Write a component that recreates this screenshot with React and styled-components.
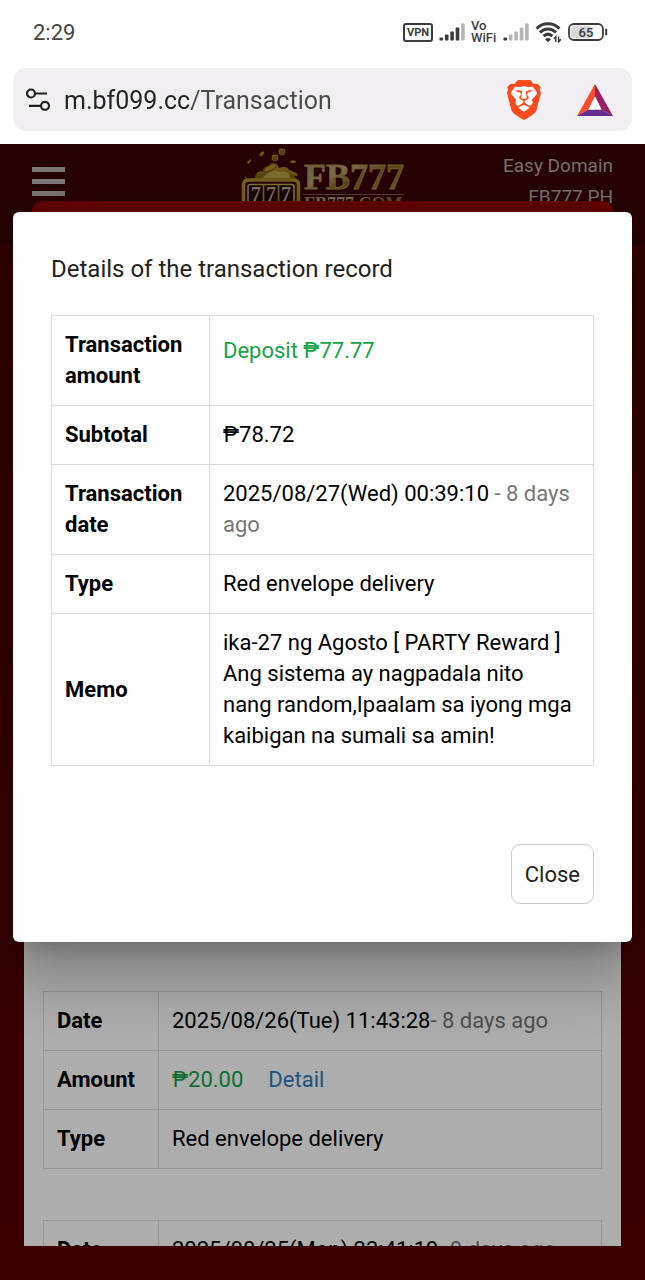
import React from "react";
import styled, { createGlobalStyle } from "styled-components";
import { SiBrave } from "react-icons/si";

const Signal = ({ level }) => (
  <svg width="26" height="18" viewBox="0 0 26 18" aria-hidden="true">
    {[3, 6, 9, 13, 17].map((h, i) => (
      <rect key={i} x={i * 5.4 + 0.5} y={17.5 - h} width="3.6" height={h} rx="0.8" fill={i < level ? "#3c3c3c" : "#b5b5b5"} />
    ))}
  </svg>
);

const Wifi = () => (
  <svg width="27" height="22" viewBox="0 0 27 22" fill="none" stroke="#3c3c3c" strokeWidth="3" aria-hidden="true">
    <path d="M1.5 7.5C8 1 18 1 24.5 7.5" />
    <path d="M5 11.5C9.8 6.8 16.2 6.8 21 11.5" />
    <path d="M8.6 15.2C11.3 12.6 14.7 12.6 17.4 15.2" />
    <path d="M13 21.2L10 18.2Q13 15.8 16 18.2Z" fill="#3c3c3c" stroke="none" />
    <path d="M20.8 21V15.5L18.8 18.2M23.6 15.5V21L25.8 18.2" strokeWidth="1.4" />
  </svg>
);

const Battery = () => (
  <svg width="40" height="18" viewBox="0 0 40 18" aria-hidden="true">
    <rect x="3" y="3" width="21" height="12" rx="3" fill="#d8d8d8" />
    <rect x="1" y="1" width="34" height="16" rx="5" fill="none" stroke="#3c3c3c" strokeWidth="1.8" />
    <path d="M38.2 6.5V11.5" stroke="#3c3c3c" strokeWidth="2" strokeLinecap="round" />
    <text x="18" y="14" textAnchor="middle" fontFamily="Roboto, sans-serif" fontSize="13" fontWeight="500" fill="#3c3c3c">65</text>
  </svg>
);

const SiteSettings = () => (
  <svg width="24" height="24" viewBox="0 0 24 24" fill="none" stroke="#222" strokeWidth="2.2" aria-hidden="true">
    <circle cx="5" cy="5.5" r="4" />
    <path d="M9 5.5H21M3 17.8H15" />
    <circle cx="19" cy="17.8" r="4" />
  </svg>
);

const BatTriangle = () => (
  <svg width="36" height="32" viewBox="0 0 36 32" aria-hidden="true">
    <path d="M18 0L0 32L11.5 25.5L18 12.5Z" fill="#ff4b2e" />
    <path d="M18 0L36 32L24.5 25.5L18 12.5Z" fill="#9c1f63" />
    <path d="M0 32H36L24.5 25.5H11.5Z" fill="#652d91" />
    <path d="M18 12.5L24.5 25.5H11.5Z" fill="#fff" />
  </svg>
);

const Logo = () => (
  <svg width="164" height="64" viewBox="0 0 164 64" role="img" aria-label="FB777.COM">
    <defs>
      <linearGradient id="gold" x1="0" y1="0" x2="1" y2="1">
        <stop offset="0" stopColor="#8d7b5a" />
        <stop offset="0.35" stopColor="#b9a36c" />
        <stop offset="0.55" stopColor="#8a6420" />
        <stop offset="1" stopColor="#b08a38" />
      </linearGradient>
      <linearGradient id="coin" x1="0" y1="0" x2="0" y2="1">
        <stop offset="0" stopColor="#b99a30" />
        <stop offset="1" stopColor="#7a5a10" />
      </linearGradient>
    </defs>
    <g fill="url(#coin)">
      <path d="M14 34Q14 27 22 27Q22 23 27 23Q30 17 36 20L38 24Q46 21 48 26Q54 27 53 32L56 35H13Z" />
      <circle cx="41" cy="8" r="3.4" />
      <circle cx="34" cy="14" r="3.4" />
      <ellipse cx="21" cy="10" rx="2.8" ry="1.7" transform="rotate(-45 21 10)" />
      <ellipse cx="52" cy="18" rx="3" ry="1.4" />
      <ellipse cx="53" cy="30" rx="4" ry="1.6" transform="rotate(20 53 30)" />
      <path d="M6 18L10 15V17L7 20ZM3 31L7 35L5 36Z" />
    </g>
    <g fill="none" stroke="#6d4d0c" strokeWidth="1">
      <ellipse cx="29" cy="24" rx="7" ry="2.6" transform="rotate(-28 29 24)" fill="#b3902c" />
      <circle cx="34" cy="14" r="1.8" />
      <circle cx="41" cy="8" r="1.8" />
    </g>
    <path d="M22 34Q30 24 38 28Q48 25 49 34Z" fill="#b6a348" />
    <path d="M2.5 64V41Q2.5 36 8 36H52Q57.5 36 57.5 41V64" fill="none" stroke="#a88c2c" strokeWidth="3.6" />
    <path d="M7 64V43Q7 40.5 9.5 40.5H50.5Q53 40.5 53 43V64" fill="#230303" stroke="#c2a744" strokeWidth="1.6" />
    <path d="M22.5 41V64M37.5 41V64" stroke="#a98f3c" strokeWidth="1.6" />
    <g fontFamily="'Liberation Serif', serif" fontWeight="700" fill="url(#gold)">
      <text x="10" y="57" fontSize="20" fill="#b3a683">7</text>
      <text x="25" y="57" fontSize="20" fill="#b3a683">7</text>
      <text x="40" y="57" fontSize="20" fill="#b3a683">7</text>
      <text x="63" y="45" fontSize="36" stroke="#a58b50" strokeWidth="0.8">FB777</text>
      <text x="63" y="66" fontSize="18">FB777.COM</text>
    </g>
    <path d="M62 50.5H163" stroke="#7d5a40" strokeWidth="1" />
  </svg>
);

const InfoTable = ({ rows, labelWidth }) => (
  <Table>
    <tbody>
      {rows.map((row) => (
        <tr key={row.label}>
          <LabelCell scope="row" $width={labelWidth}>{row.label}</LabelCell>
          <ValueCell>{row.value}</ValueCell>
        </tr>
      ))}
    </tbody>
  </Table>
);

const App = () => {
  return (
    <>
      <GlobalStyle />
      <Screen>
        <StatusBar>
          <Clock>2:29</Clock>
          <StatusIcons>
            <VpnBadge>VPN</VpnBadge>
            <Signal level={4} />
            <VoWifi>
              <span>Vo</span>
              <span>WiFi</span>
            </VoWifi>
            <Signal level={1} />
            <Wifi />
            <Battery />
          </StatusIcons>
        </StatusBar>
        <AddressBar>
          <IconButton type="button" aria-label="Site settings"><SiteSettings /></IconButton>
          <UrlInput type="text" aria-label="Address" defaultValue="m.bf099.cc/Transaction" />
          <IconButton type="button" aria-label="Brave Shields">
            <Shield><SiBrave size={40} fill="#fb4a1c" /></Shield>
          </IconButton>
          <IconButton type="button" aria-label="Brave Rewards"><BatTriangle /></IconButton>
        </AddressBar>

        <Site>
          <SiteHeader>
            <MenuButton type="button" aria-label="Menu"><i /><i /><i /></MenuButton>
            <Logo />
            <DomainLinks>
              <a href="#domain">Easy Domain</a>
              <a href="#ph">FB777 PH</a>
            </DomainLinks>
          </SiteHeader>
          <Banner />
          <RecordPanel>
            {RECORDS.map((rows, index) => (
              <InfoTable key={index} rows={rows} labelWidth={115} />
            ))}
          </RecordPanel>

          <Backdrop />
          <Modal role="dialog" aria-modal="true" aria-labelledby="modal-title">
            <ModalTitle id="modal-title">Details of the transaction record</ModalTitle>
            <InfoTable rows={DETAILS} labelWidth={158} />
            <ModalActions>
              <CloseButton type="button">Close</CloseButton>
            </ModalActions>
          </Modal>
        </Site>
      </Screen>
    </>
  );
};

const GlobalStyle = createGlobalStyle`
  * {
    box-sizing: border-box;
  }

  body {
    margin: 0;
    background: #fff;
    font-family: Roboto, "Liberation Sans", sans-serif;
    font-size: 22px;
    line-height: 31px;
    color: #000;
  }

  button, input {
    font: inherit;
  }

  svg {
    display: block;
    flex: none;
  }
`;

const Screen = styled.div`
  display: flex;
  flex-direction: column;
  height: 100vh;
  overflow: hidden;
`;

const StatusBar = styled.div`
  display: flex;
  align-items: center;
  justify-content: space-between;
  flex: none;
  height: 68px;
  padding: 0 37px 4px 33px;
`;

const Clock = styled.span`
  color: #444;
`;

const StatusIcons = styled.div`
  display: flex;
  align-items: center;
  gap: 6px;
`;

const VpnBadge = styled.span`
  width: 30px;
  border: 2px solid #3c3c3c;
  border-radius: 3px;
  color: #3c3c3c;
  font-size: 11px;
  font-weight: 700;
  line-height: 15px;
  text-align: center;
`;

const VoWifi = styled.span`
  display: flex;
  flex-direction: column;
  width: 26px;
  color: #3c3c3c;
  font-size: 13px;
  font-weight: 500;
  line-height: 12px;
`;

const AddressBar = styled.div`
  display: flex;
  align-items: center;
  flex: none;
  height: 63px;
  margin: 0 13px 13px;
  padding: 0 19px 0 13px;
  border-radius: 13px;
  background: #f1eff1;
`;

const IconButton = styled.button`
  display: flex;
  padding: 0;
  border: 0;
  background: none;

  & + & {
    margin-left: 33px;
  }
`;

const UrlInput = styled.input`
  flex: 1;
  min-width: 0;
  margin: 0 14px;
  padding: 1px 0 0;
  border: 0;
  outline: 0;
  background: linear-gradient(90deg, #222 128px, #4b4b4b 128px);
  background-clip: text;
  color: transparent;
  font-size: 25px;
`;

const Shield = styled.span`
  display: flex;
  background: radial-gradient(ellipse 12px 15px, #fff 98%, transparent);
`;

const Site = styled.div`
  position: relative;
  display: flex;
  flex-direction: column;
  flex: 1;
  min-height: 0;
  background: linear-gradient(#4a0000, #560000);
`;

const SiteHeader = styled.header`
  display: grid;
  grid-template-columns: 1fr auto 1fr;
  align-items: start;
  flex: none;
  height: 101px;
  padding: 0 32px;
  background: #3a0000;
`;

const MenuButton = styled.button`
  display: flex;
  flex-direction: column;
  gap: 7px;
  width: 33px;
  margin-top: 23px;
  padding: 0;
  border: 0;
  background: none;

  i {
    width: 100%;
    height: 5px;
    background: #b9b2b2;
  }
`;

const DomainLinks = styled.nav`
  display: flex;
  flex-direction: column;
  align-items: flex-end;
  padding-top: 6px;
  font-size: 19px;

  a {
    color: #b3a6a6;
    text-decoration: none;
  }
`;

const Banner = styled.div`
  flex: none;
  height: 60px;
  margin: -44px 32px 0;
  border-radius: 10px 10px 0 0;
  background: #930000;
`;

const RecordPanel = styled.main`
  display: flex;
  flex-direction: column;
  gap: 51px;
  flex: 1;
  min-height: 0;
  overflow: hidden;
  margin: 0 24px 34px;
  padding: 730px 19px 0;
  background: #fff;
`;

const Backdrop = styled.div`
  position: absolute;
  inset: 0;
  background: rgba(0, 0, 0, 0.32);
`;

const Modal = styled.section`
  position: absolute;
  top: 68px;
  left: 13px;
  right: 13px;
  padding: 42px 38px 38px;
  border-radius: 6px;
  background: #fff;
  box-shadow: 0 18px 24px -11px rgba(0, 0, 0, 0.2), 0 38px 61px 5px rgba(0, 0, 0, 0.14),
    0 14px 74px 13px rgba(0, 0, 0, 0.12);
`;

const ModalTitle = styled.h2`
  margin: 0 0 30px;
  color: #222;
  font-size: 24px;
  font-weight: 400;
`;

const Table = styled.table`
  width: 100%;
  border-collapse: collapse;
`;

const LabelCell = styled.th`
  width: ${(props) => props.$width}px;
  padding: 13px 13px 14px;
  border: 1px solid #ddd;
  font-weight: 700;
  text-align: left;
`;

const ValueCell = styled.td`
  padding: 13px 13px 14px;
  border: 1px solid #ddd;
  vertical-align: top;
`;

const Raised = styled.div`
  padding: 6px 0;
`;

const Money = styled.span`
  color: #16a34a;
`;

const Ago = styled.span`
  color: #777;
`;

const DetailLink = styled.a`
  margin-left: 25px;
  color: #337ab7;
  text-decoration: none;
`;

const ModalActions = styled.div`
  display: flex;
  justify-content: flex-end;
  margin-top: 78px;
`;

const CloseButton = styled.button`
  height: 60px;
  padding: 0 13px;
  border: 1px solid #ccc;
  border-radius: 9px;
  background: #fff;
  color: #222;
`;

const DETAILS = [
  { label: "Transaction amount", value: <Raised><Money>Deposit ₱77.77</Money></Raised> },
  { label: "Subtotal", value: "₱78.72" },
  { label: "Transaction date", value: <>2025/08/27(Wed) 00:39:10 <Ago>- 8 days ago</Ago></> },
  { label: "Type", value: "Red envelope delivery" },
  {
    label: "Memo",
    value: (
      <>
        ika-27 ng Agosto [ PARTY Reward ]<br />
        Ang sistema ay nagpadala nito<br />
        nang random,Ipaalam sa iyong mga kaibigan na sumali sa amin!
      </>
    ),
  },
];

const RECORDS = [
  [
    { label: "Date", value: <>2025/08/26(Tue) 11:43:28<Ago>- 8 days ago</Ago></> },
    { label: "Amount", value: <><Money>₱20.00</Money><DetailLink href="#detail">Detail</DetailLink></> },
    { label: "Type", value: "Red envelope delivery" },
  ],
  [{ label: "Date", value: <>2025/08/25(Mon) 23:41:19<Ago>- 9 days ago</Ago></> }],
];

export default App;
